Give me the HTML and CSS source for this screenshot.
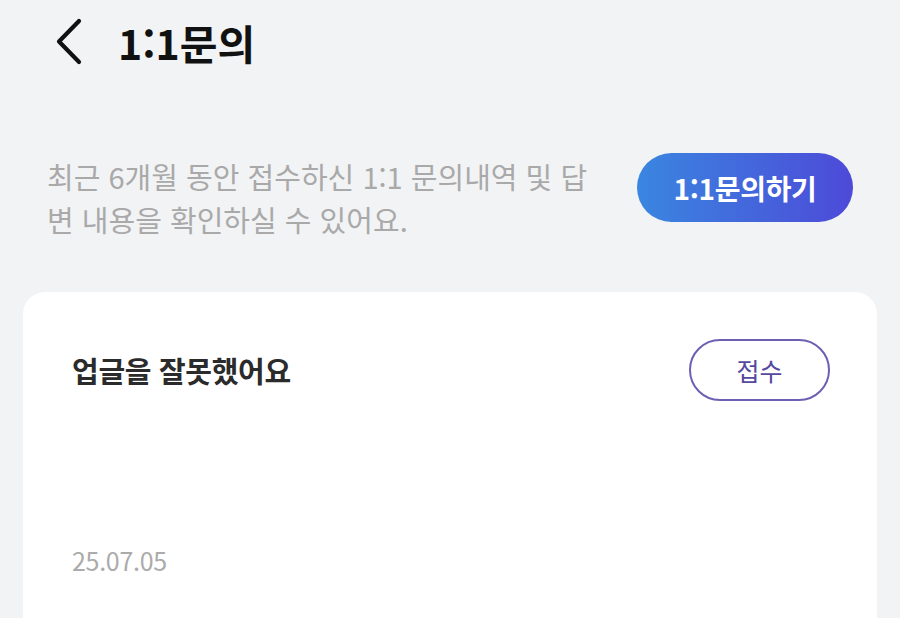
FILE: index.html
```html
<!DOCTYPE html>
<html lang="ko">
<head>
<meta charset="utf-8">
<link rel="stylesheet" href="styles.css">
</head>
<body>
<header class="topbar">
  <span class="back">
    <svg width="32" height="48" viewBox="0 0 32 48"><path d="M25 3 L5 23.5 L25 44" fill="none" stroke="#111" stroke-width="4.2" stroke-linecap="round" stroke-linejoin="round"/></svg>
  </span>
  <h1 class="title">1:1문의</h1>
</header>
<section class="intro">
  <p class="desc">최근 6개월 동안 접수하신 1:1 문의내역 및 답<br>변 내용을 확인하실 수 있어요.</p>
  <button class="ask">1:1문의하기</button>
</section>
<main class="card">
  <div class="card-head">
    <h2 class="card-title">업글을 잘못했어요</h2>
    <span class="status">접수</span>
  </div>
  <div class="date">25.07.05</div>
</main>
</body>
</html>
```
FILE: styles.css
```css
html, body {
  margin: 0;
  padding: 0;
  background: #f2f3f5;
  font-family: "Noto Sans CJK KR", "Noto Sans", sans-serif;
  height: 618px;
  overflow: hidden;
}
.topbar {
  display: flex;
  align-items: center;
  height: 84px;
  padding-left: 54px;
}
.back {
  display: flex;
  width: 32px;
  height: 48px;
}
.title {
  margin: 0 0 0 32px;
  font-size: 41px;
  font-weight: 700;
  color: #111;
  line-height: 1;
}
.intro {
  display: flex;
  align-items: flex-start;
  justify-content: space-between;
  padding: 71px 47px 0 47px;
}
.desc {
  margin: 0;
  font-size: 29px;
  line-height: 43px;
  color: #a9a9a9;
  letter-spacing: 0;
}
.ask {
  flex: none;
  width: 216px;
  height: 69px;
  margin-top: -2px;
  border: none;
  border-radius: 35px;
  background: linear-gradient(90deg, #3a86e0 0%, #4d4ad8 100%);
  color: #fff;
  font-family: inherit;
  font-size: 28px;
  font-weight: 700;
  letter-spacing: -0.3px;
}
.card {
  box-sizing: border-box;
  margin: 51px 23px 0 23px;
  background: #fff;
  border-radius: 22px 22px 0 0;
  padding: 47px 47px 0 49px;
  height: 326px;
}
.card-head {
  display: flex;
  align-items: center;
  justify-content: space-between;
}
.card-title {
  margin: 0;
  font-size: 29px;
  font-weight: 700;
  color: #2b2b2b;
  letter-spacing: -0.3px;
}
.status {
  box-sizing: border-box;
  width: 141px;
  height: 62px;
  border: 2px solid #6b60b2;
  border-radius: 31px;
  display: flex;
  align-items: center;
  justify-content: center;
  font-size: 25px;
  color: #54489f;
}
.date {
  margin-top: 143px;
  font-size: 25px;
  line-height: 32px;
  color: #ababab;
  letter-spacing: -0.3px;
}
```
